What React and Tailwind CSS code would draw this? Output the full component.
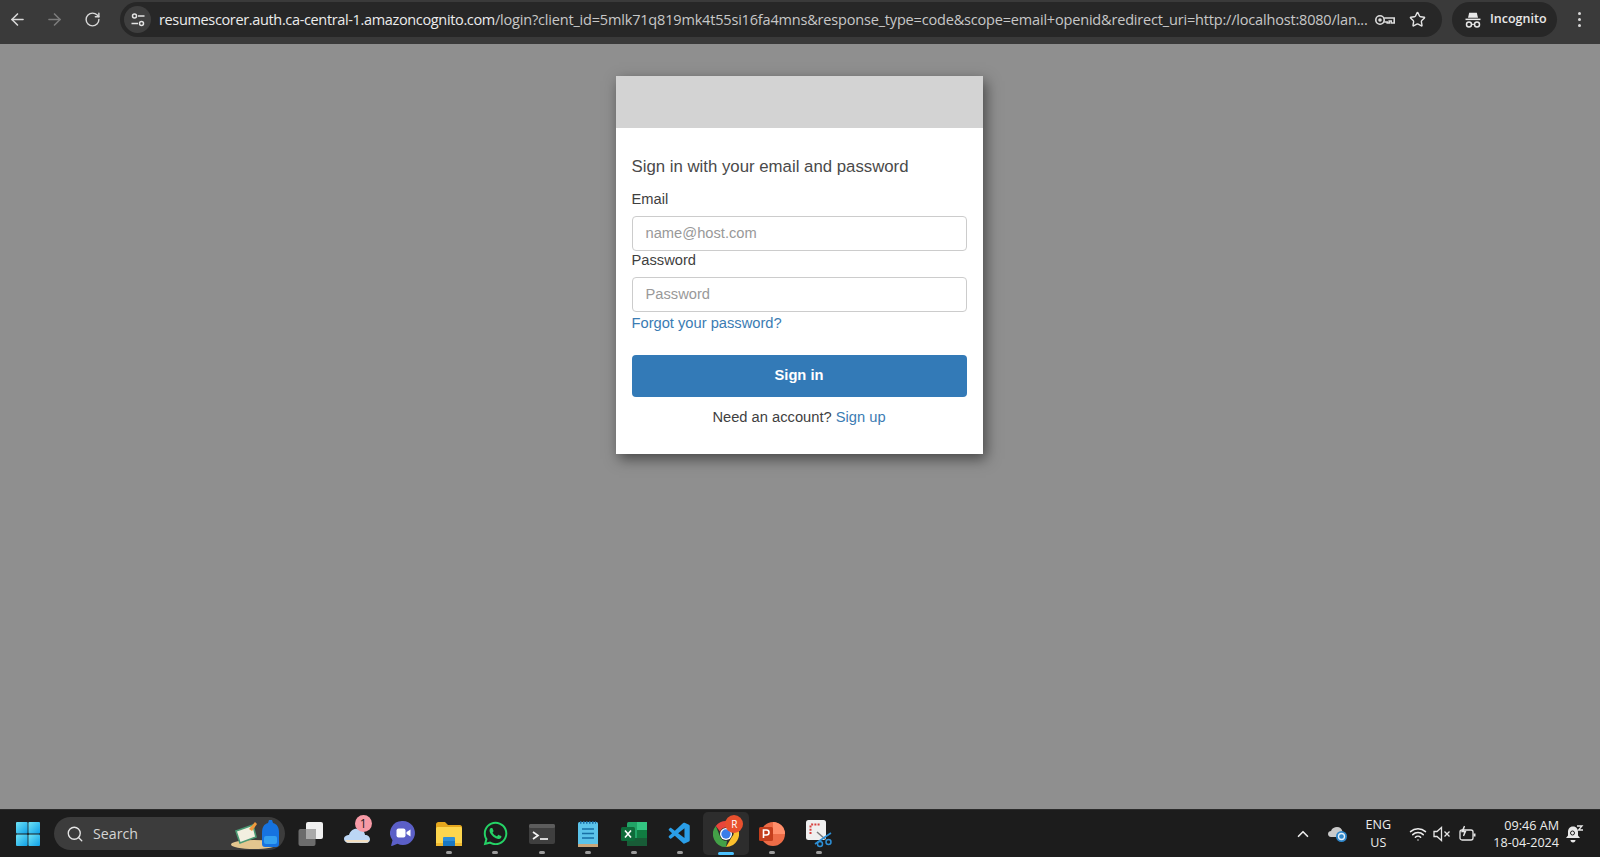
import { ArrowLeft, ArrowRight, RotateCw, Star, Search, ChevronUp, Wifi } from 'lucide-react';
import { FaWhatsapp } from 'react-icons/fa';
import { VscVscode } from 'react-icons/vsc';

const chromeFont = "font-['Open_Sans','Noto_Sans',sans-serif]";
const arial = "font-['Liberation_Sans',Arial,sans-serif]";

function TuneIcon() {
  return (
    <svg width="16" height="16" viewBox="0 0 16 16" fill="none" stroke="#e3e3e3" strokeWidth="1.5">
      <circle cx="4.5" cy="4" r="2" />
      <path d="M8 4h6.5M1.5 11.5H8" />
      <circle cx="11.5" cy="11.5" r="2" />
    </svg>
  );
}

function KeyIcon() {
  return (
    <svg width="22" height="14" viewBox="0 0 22 14" fill="none" stroke="#dcdcdc" strokeWidth="1.6">
      <circle cx="6" cy="7" r="4.2" />
      <circle cx="6" cy="7" r="1" fill="#dcdcdc" />
      <path d="M10.2 5h10v5h-3V8h-2v2h-2V9h-3" />
    </svg>
  );
}

function IncognitoIcon() {
  return (
    <svg width="18" height="18" viewBox="0 0 18 18" fill="#e8e8e8">
      <path d="M5.2 1.800h7.600l1.200 5H4z" />
      <rect x="1.500" y="7.600" width="15" height="1.500" />
      <circle cx="5" cy="13.400" r="2.500" fill="none" stroke="#e8e8e8" strokeWidth="1.500" />
      <circle cx="13" cy="13.400" r="2.500" fill="none" stroke="#e8e8e8" strokeWidth="1.500" />
      <path d="M7.500 12.800h3v1.100h-3z" />
    </svg>
  );
}

function WindowsLogo() {
  return (
    <svg width="24" height="24" viewBox="0 0 24 24">
      <defs>
        <linearGradient id="win" x1="0" y1="0" x2="1" y2="1">
          <stop offset="0" stopColor="#6fe3f5" />
          <stop offset="1" stopColor="#0f9fe6" />
        </linearGradient>
      </defs>
      <rect x="0" y="0" width="11.6" height="11.6" rx="1" fill="url(#win)" />
      <rect x="12.4" y="0" width="11.6" height="11.6" rx="1" fill="url(#win)" />
      <rect x="0" y="12.4" width="11.6" height="11.6" rx="1" fill="url(#win)" />
      <rect x="12.4" y="12.4" width="11.6" height="11.6" rx="1" fill="url(#win)" />
    </svg>
  );
}

function SearchArt() {
  return (
    <svg width="48" height="34" viewBox="0 0 48 34">
      <ellipse cx="23" cy="27.5" rx="23" ry="4.5" fill="#e3c68f" />
      <path d="M5 14l17-6 3 12-16 6z" fill="#f2efe0" stroke="#4a9a74" strokeWidth="1.6" />
      <path d="M18 12l6-7 2 2-5 7z" fill="#ef9a3d" />
      <path d="M31 16c0-6 2-9 6-10l1-3 3 0 1 3c4 1 6 4 6 10v11c0 2-1 3-3 3H34c-2 0-3-1-3-3z" fill="#1673e0" />
      <rect x="33" y="19" width="13" height="8" rx="2" fill="#33a0f0" />
    </svg>
  );
}

function TaskView() {
  return (
    <svg width="26" height="26" viewBox="0 0 26 26">
      <rect x="0.5" y="8" width="17" height="17" rx="2" fill="#6c6c6c" />
      <rect x="8" y="1" width="17" height="17" rx="2" fill="#f0f0f0" />
      <rect x="8" y="8" width="10" height="10" fill="#a9a9a9" />
    </svg>
  );
}

function WeatherCloud() {
  return (
    <div className="relative w-[26px] h-[26px]">
      <svg width="26" height="26" viewBox="0 0 26 26">
        <path d="M5 22c-3 0-5-2-5-4 0-3 3-4 5-4 1-4 5-7 9-6 4 0 7 3 7 6 3 0 5 2 5 4.500 0 2-2 3.500-4 3.500z" fill="#bcd6f5" />
        <path d="M1 19h24l-1 2.500H3z" fill="#f3dfc0" />
      </svg>
      <span className={`absolute -top-[6px] left-[11px] w-[17px] h-[17px] rounded-full bg-[#f79aa6] text-[#1c1c1c] text-[12px] leading-[17px] text-center ${chromeFont}`}>1</span>
    </div>
  );
}

function MeetIcon() {
  return (
    <svg width="26" height="28" viewBox="0 0 26 28">
      <path d="M13 1a12 12 0 1 1-5.500 22.700L2 26c-.5.200-1-.2-.8-.8l1.300-5A12 12 0 0 1 13 1z" fill="#5b5fc7" />
      <rect x="6.500" y="8.500" width="9" height="9" rx="2" fill="#fff" />
      <path d="M16.500 12l4-2.500v7l-4-2.500z" fill="#fff" />
    </svg>
  );
}

function FolderIcon() {
  return (
    <svg width="26" height="24" viewBox="0 0 26 24">
      <path d="M0 2.500C0 1 1 0 2.500 0H9l3 3h12c1 0 2 1 2 2v4H0z" fill="#e5a71e" />
      <rect x="0" y="5" width="26" height="19" rx="1.500" fill="#fdd64e" />
      <rect x="7" y="15" width="12" height="9" rx="1" fill="#2f8fd8" />
      <rect x="0" y="21" width="26" height="3" fill="#f0b92f" />
      <rect x="7" y="19" width="12" height="5" fill="#1a78c2" />
    </svg>
  );
}

function TerminalIcon() {
  return (
    <svg width="26" height="20" viewBox="0 0 26 20">
      <rect width="26" height="20" rx="2" fill="#3f3f3f" />
      <rect width="26" height="4" rx="1.500" fill="#5c5c5c" />
      <path d="M4 8l5 3.500L4 15" fill="none" stroke="#f2f2f2" strokeWidth="1.700" />
      <path d="M11 15h8" stroke="#f2f2f2" strokeWidth="1.700" />
    </svg>
  );
}

function NotepadIcon() {
  return (
    <svg width="20" height="26" viewBox="0 0 20 26">
      <rect y="1" width="20" height="25" rx="1.500" fill="#5bc3ea" />
      <rect y="23" width="20" height="3" fill="#c9a67a" />
      <path d="M2 1.500h16" stroke="#1c6fa8" strokeWidth="2.500" strokeDasharray="1.500 1.500" />
      <path d="M4 8h12M4 12.500h12M4 17h12" stroke="#176fa5" strokeWidth="1.500" />
    </svg>
  );
}

function ExcelIcon() {
  return (
    <svg width="26" height="24" viewBox="0 0 26 24">
      <rect x="6" y="0" width="20" height="24" rx="1.500" fill="#21a366" />
      <rect x="16" y="0" width="10" height="8" fill="#33c481" />
      <rect x="6" y="16" width="20" height="8" fill="#185c37" />
      <rect x="16" y="8" width="10" height="8" fill="#107c41" />
      <rect x="0" y="5" width="14" height="14" rx="1.500" fill="#0e6b3a" />
      <path d="M4 8.500l6 7M10 8.500l-6 7" stroke="#fff" strokeWidth="1.600" />
    </svg>
  );
}

function ChromeIcon() {
  return (
    <div className="relative w-[26px] h-[26px]">
      <svg width="26" height="26" viewBox="0 0 26 26">
        <path d="M13 0a13 13 0 0 1 11.260 6.500H13a6.500 6.500 0 0 0-6 4L2.800 4.900A13 13 0 0 1 13 0z" fill="#e8453c" />
        <path d="M24.260 6.500A13 13 0 0 1 13 26l5.500-9.500a6.500 6.500 0 0 0 0-10z" fill="#fbc02d" />
        <path d="M13 26A13 13 0 0 1 2.800 4.900L7.500 16.500a6.500 6.500 0 0 0 6.500 3.300z" fill="#43a047" />
        <circle cx="13" cy="13" r="6" fill="#fff" />
        <circle cx="13" cy="13" r="4.700" fill="#3b7de8" />
      </svg>
      <span className={`absolute -top-[6px] left-[12px] w-[18px] h-[18px] rounded-full bg-[#e8502e] text-white text-[10px] leading-[18px] text-center ${chromeFont}`}>R</span>
    </div>
  );
}

function PowerPointIcon() {
  return (
    <svg width="26" height="26" viewBox="0 0 26 26">
      <circle cx="14" cy="13" r="12" fill="#ed6c47" />
      <path d="M14 1a12 12 0 0 1 12 12H14z" fill="#ff8f6b" />
      <rect x="0" y="6" width="14" height="14" rx="1.500" fill="#c43e1c" />
      <path d="M4.500 17V9h3a2.500 2.500 0 0 1 0 5h-3" fill="none" stroke="#fff" strokeWidth="1.600" />
    </svg>
  );
}

function SnipIcon() {
  return (
    <svg width="26" height="28" viewBox="0 0 26 28">
      <rect x="0" y="0" width="20" height="20" rx="2.500" fill="#efefef" />
      <path d="M4.500 14V5.500a1 1 0 0 1 1-1H14" fill="none" stroke="#d8403f" strokeWidth="2" strokeDasharray="2 1.200" />
      <path d="M11 12l8 7" stroke="#7a7a7a" strokeWidth="1.500" />
      <path d="M9 24l10-7 6-4" stroke="#2d8fd5" strokeWidth="1.600" fill="none" />
      <circle cx="22.500" cy="22" r="2.500" fill="none" stroke="#2d8fd5" strokeWidth="1.500" />
      <circle cx="14" cy="24" r="2.500" fill="none" stroke="#2d8fd5" strokeWidth="1.500" />
    </svg>
  );
}

function TrayCloud() {
  return (
    <svg width="20" height="18" viewBox="0 0 20 18">
      <path d="M3 12C1 12 0 10.500 0 9c0-2 1.500-3 3-3 1-3 3.500-4 6-4 3 0 5 2 5.500 4.500V12z" fill="#c9c9c9" />
      <circle cx="13.500" cy="11.500" r="5.500" fill="#2f86c9" />
      <circle cx="13.500" cy="11.500" r="3" fill="none" stroke="#e4f0fa" strokeWidth="1.300" />
    </svg>
  );
}

function MutedSpeaker() {
  return (
    <svg width="18" height="16" viewBox="0 0 18 16" fill="none" stroke="#e6e6e6" strokeWidth="1.300">
      <path d="M1 5.500h3L8.500 1.500v13L4 10.500H1z" />
      <path d="M11.500 5.500l5 5M16.500 5.500l-5 5" />
    </svg>
  );
}

function BatteryIcon() {
  return (
    <svg width="18" height="18" viewBox="0 0 18 18" fill="none" stroke="#e6e6e6" strokeWidth="1.300">
      <rect x="1" y="5" width="13" height="10" rx="2" />
      <path d="M15.500 8.500v3" strokeWidth="2" />
      <path d="M5.500 1L3 6.500h3.500L4.500 11" fill="#e6e6e6" />
    </svg>
  );
}

function BellIcon() {
  return (
    <svg width="20" height="20" viewBox="0 0 20 20">
      <path d="M9 2.500c3.500 0 5 2.500 5 5.500v3.500l2 2.500H2l2-2.500V8c0-3 1.500-5.500 5-5.500z" fill="#e8e8e8" />
      <path d="M6.500 16h5c0 1.500-1 2.500-2.500 2.500S6.500 17.500 6.500 16z" fill="#e8e8e8" />
      <circle cx="8.500" cy="9" r="2" fill="none" stroke="#1c1c1c" strokeWidth="1" />
      <path d="M13 2h5l-3.500 4H19" fill="none" stroke="#e8e8e8" strokeWidth="1.300" />
    </svg>
  );
}

function TaskSlot({ children, open, active }) {
  return (
    <div className={`relative w-[46.2px] h-[43px] flex items-center justify-center rounded-[5px] ${active ? 'bg-[#2d2d2d]' : ''}`}>
      {children}
      {open && !active && <span className="absolute bottom-[1px] w-[6px] h-[3px] rounded-full bg-[#9c9c9c]" />}
      {active && <span className="absolute bottom-0 w-[16px] h-[3px] rounded-full bg-[#4cc2ff]" />}
    </div>
  );
}

function Field({ label, placeholder }) {
  return (
    <div>
      <div className="text-[14.7px] leading-[18px] h-[26px] text-[#3f3f3f]">{label}</div>
      <div className="h-[35px] border border-[#cccccc] rounded-[4px] bg-white pl-[13px] flex items-center text-[14.7px] text-[#999999]">
        {placeholder}
      </div>
    </div>
  );
}

export default function App() {
  return (
    <div className="h-screen flex flex-col overflow-hidden bg-[#8f8f8f]">
      {/* barre chrome */}
      <header className={`h-[44px] shrink-0 bg-[#3a3a3a] flex items-center pb-[6px] pt-[1px] ${chromeFont}`}>
        <div className="w-[120px] flex items-center text-[#d8d8d8] shrink-0">
          <ArrowLeft size={19} strokeWidth={2} className="ml-[8px]" />
          <ArrowRight size={19} strokeWidth={2} className="ml-[18px] text-[#7c7c7c]" />
          <RotateCw size={17} strokeWidth={2} className="ml-[20px]" />
        </div>
        <div className="w-[1322px] h-[35px] shrink-0 rounded-full bg-[#272727] flex items-center pl-[4px]">
          <div className="w-[27px] h-[27px] rounded-full bg-[#3f3f3f] flex items-center justify-center shrink-0">
            <TuneIcon />
          </div>
          <div className="ml-[8px] w-[1207px] shrink-0 whitespace-nowrap text-[14.5px] tracking-[-0.18px] text-[#c7c7c7]">
            <span className="text-[#ececec] tracking-[-0.35px]">resumescorer.auth.ca-central-1.amazoncognito.com</span>
            /login?client_id=5mlk71q819mk4t55si16fa4mns&amp;response_type=code&amp;scope=email+openid&amp;redirect_uri=http://localhost:8080/lan...
          </div>
          <div className="ml-[8px]"><KeyIcon /></div>
          <Star size={17} strokeWidth={2} className="ml-[13px] text-[#e3e3e3]" />
        </div>
        <div className="ml-[10px] w-[105px] h-[35px] rounded-full bg-[#272727] flex items-center pl-[12px] shrink-0">
          <IncognitoIcon />
          <span className="ml-[8px] text-[12.5px] font-semibold text-[#e8e8e8]">Incognito</span>
        </div>
        <div className="ml-[21px] flex flex-col gap-[3px]">
          <span className="w-[3px] h-[3px] rounded-full bg-[#d8d8d8]" />
          <span className="w-[3px] h-[3px] rounded-full bg-[#d8d8d8]" />
          <span className="w-[3px] h-[3px] rounded-full bg-[#d8d8d8]" />
        </div>
      </header>

      {/* page */}
      <main className={`flex-1 min-h-0 flex justify-center pt-[32px] ${arial}`}>
        <div className="w-[367px] h-[378px] bg-white shadow-[3px_5px_13px_rgba(0,0,0,0.5)] -translate-x-[1px]">
          <div className="h-[52px] bg-[#d3d3d3]" />
          <div className="px-[16px] pt-[26px]">
            <h1 className="text-[16.8px] leading-[26px] text-[#4a4a4a] h-[36px]">Sign in with your email and password</h1>
            <Field label="Email" placeholder="name@host.com" />
            <Field label="Password" placeholder="Password" />
            <a className="block text-[14.7px] leading-[20px] mt-[1px] text-[#3b7cb3]">Forgot your password?</a>
            <button className="w-full h-[42px] mt-[22px] pb-[2px] rounded-[4px] bg-[#337ab7] text-white font-bold text-[14.7px]">Sign in</button>
            <p className="text-center text-[14.7px] leading-[20px] mt-[10px] text-[#3f3f3f]">
              Need an account? <a className="text-[#3b7cb3]">Sign up</a>
            </p>
          </div>
        </div>
      </main>

      {/* barre des tâches */}
      <footer className={`h-[48px] shrink-0 bg-[#1c1c1c] border-t border-[#2b2b2b] flex items-center ${chromeFont}`}>
        <div className="w-[54px] pl-[16px] shrink-0"><WindowsLogo /></div>
        <div className="w-[231px] h-[33px] shrink-0 rounded-full bg-[#3c3c3c] flex items-center pl-[12px] relative">
          <Search size={18} strokeWidth={1.8} className="text-[#e6e6e6]" />
          <span className="ml-[9px] text-[14.2px] text-[#d4d4d4]">Search</span>
          <div className="absolute right-[6px] top-0"><SearchArt /></div>
        </div>
        <div className="ml-[2.5px] flex items-center">
          <TaskSlot><TaskView /></TaskSlot>
          <TaskSlot><WeatherCloud /></TaskSlot>
          <TaskSlot><MeetIcon /></TaskSlot>
          <TaskSlot open><FolderIcon /></TaskSlot>
          <TaskSlot open><FaWhatsapp size={27} className="text-[#25d366]" /></TaskSlot>
          <TaskSlot open><TerminalIcon /></TaskSlot>
          <TaskSlot open><NotepadIcon /></TaskSlot>
          <TaskSlot open><ExcelIcon /></TaskSlot>
          <TaskSlot open><VscVscode size={26} className="text-[#2a9ee8]" /></TaskSlot>
          <TaskSlot active><ChromeIcon /></TaskSlot>
          <TaskSlot open><PowerPointIcon /></TaskSlot>
          <TaskSlot open><SnipIcon /></TaskSlot>
        </div>
        <div className="flex-1" />
        <div className="flex items-center text-[#ececec] pr-[16px]">
          <ChevronUp size={18} strokeWidth={2.2} />
          <div className="ml-[16px]"><TrayCloud /></div>
          <div className="ml-[15px] w-[30px] text-center text-[12.5px] leading-[18px] pt-[1px]">
            <div>ENG</div>
            <div>US</div>
          </div>
          <Wifi size={18} strokeWidth={2} className="ml-[16px]" />
          <div className="ml-[6px]"><MutedSpeaker /></div>
          <div className="ml-[8px]"><BatteryIcon /></div>
          <div className="ml-[16px] text-right text-[12.6px] leading-[17px]">
            <div>09:46 AM</div>
            <div>18-04-2024</div>
          </div>
          <div className="ml-[5px]"><BellIcon /></div>
        </div>
      </footer>
    </div>
  );
}
